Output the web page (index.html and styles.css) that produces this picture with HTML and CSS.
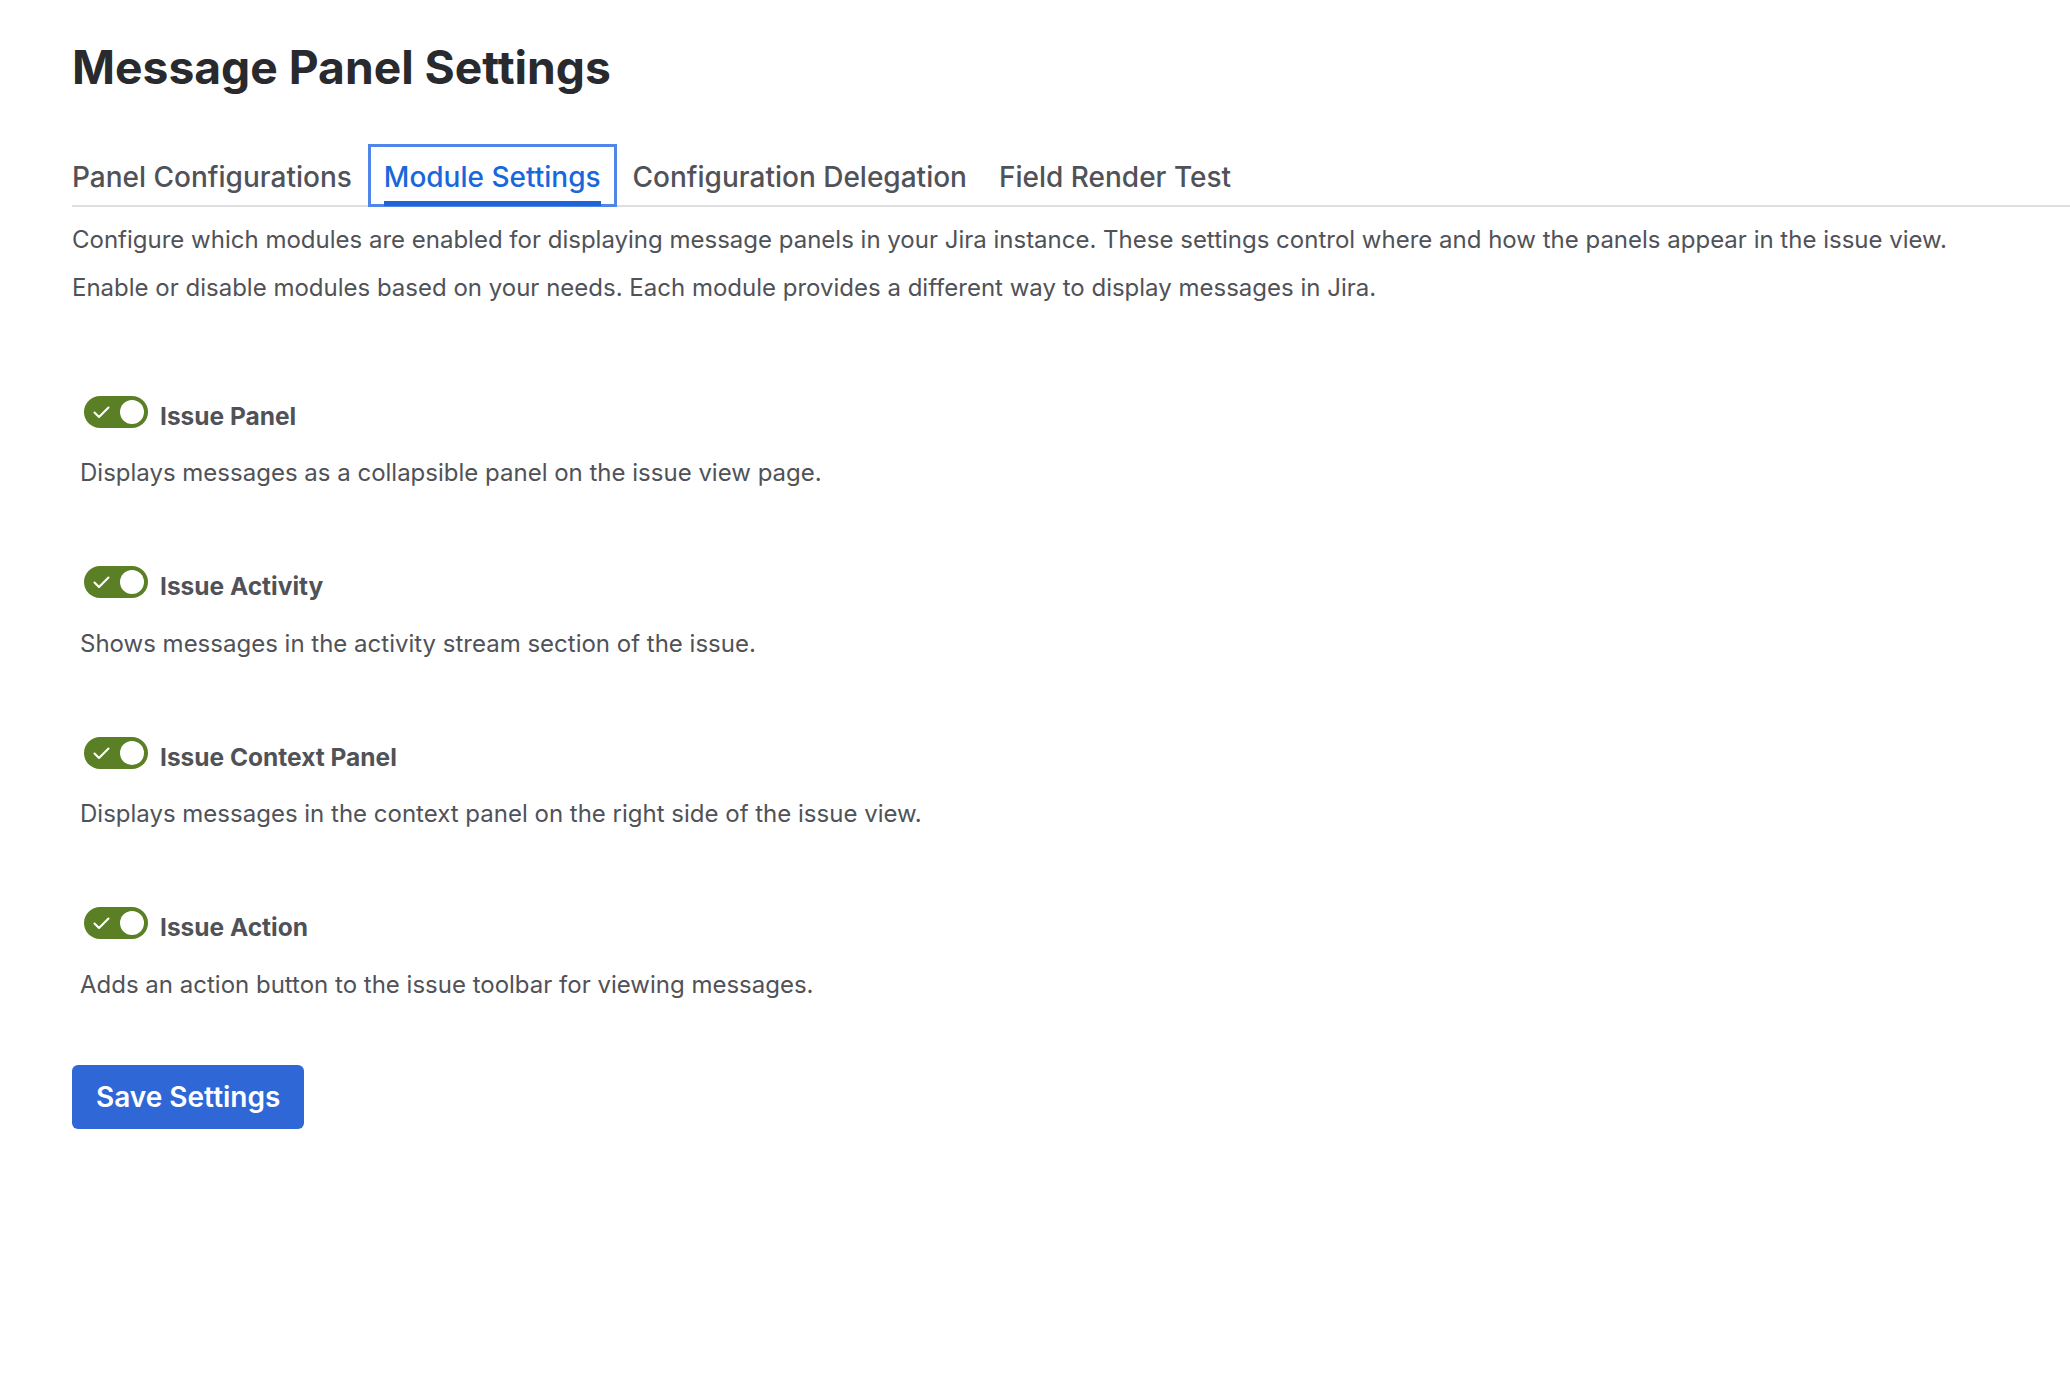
FILE: index.html
```html
<!DOCTYPE html>
<html lang="en">
<head>
<meta charset="utf-8">
<title>Message Panel Settings</title>
<link rel="stylesheet" href="styles.css">
</head>
<body>
<div class="page">
  <h1 class="title">Message Panel Settings</h1>
  <div class="tabbar">
    <div class="tablist">
      <div class="tab">Panel Configurations</div>
      <div class="tab tab-selected">Module Settings</div>
      <div class="tab">Configuration Delegation</div>
      <div class="tab">Field Render Test</div>
    </div>
  </div>
  <p class="intro">Configure which modules are enabled for displaying message panels in your Jira instance. These settings control where and how the panels appear in the issue view.</p>
  <p class="intro">Enable or disable modules based on your needs. Each module provides a different way to display messages in Jira.</p>

  <div class="modules">
    <div class="module">
      <div class="module-row">
        <span class="toggle"><svg class="check" width="17" height="13" viewBox="0 0 17 13"><polyline points="1.5,6.5 6,11 15.5,1.5" fill="none" stroke="#fff" stroke-width="2.1" stroke-linecap="round" stroke-linejoin="round"/></svg><span class="knob"></span></span>
        <span class="module-label">Issue Panel</span>
      </div>
      <p class="module-desc">Displays messages as a collapsible panel on the issue view page.</p>
    </div>
    <div class="module">
      <div class="module-row">
        <span class="toggle"><svg class="check" width="17" height="13" viewBox="0 0 17 13"><polyline points="1.5,6.5 6,11 15.5,1.5" fill="none" stroke="#fff" stroke-width="2.1" stroke-linecap="round" stroke-linejoin="round"/></svg><span class="knob"></span></span>
        <span class="module-label">Issue Activity</span>
      </div>
      <p class="module-desc">Shows messages in the activity stream section of the issue.</p>
    </div>
    <div class="module">
      <div class="module-row">
        <span class="toggle"><svg class="check" width="17" height="13" viewBox="0 0 17 13"><polyline points="1.5,6.5 6,11 15.5,1.5" fill="none" stroke="#fff" stroke-width="2.1" stroke-linecap="round" stroke-linejoin="round"/></svg><span class="knob"></span></span>
        <span class="module-label">Issue Context Panel</span>
      </div>
      <p class="module-desc">Displays messages in the context panel on the right side of the issue view.</p>
    </div>
    <div class="module">
      <div class="module-row">
        <span class="toggle"><svg class="check" width="17" height="13" viewBox="0 0 17 13"><polyline points="1.5,6.5 6,11 15.5,1.5" fill="none" stroke="#fff" stroke-width="2.1" stroke-linecap="round" stroke-linejoin="round"/></svg><span class="knob"></span></span>
        <span class="module-label">Issue Action</span>
      </div>
      <p class="module-desc">Adds an action button to the issue toolbar for viewing messages.</p>
    </div>
  </div>

  <button class="save-btn" type="button">Save Settings</button>
</div>
</body>
</html>
```

FILE: styles.css
```css
* { box-sizing: border-box; }

html, body {
  margin: 0;
  padding: 0;
  background: #ffffff;
}

body {
  font-family: Inter, "Noto Sans", "Liberation Sans", sans-serif;
  color: #292a2e;
}

.page {
  padding: 39px 0 0 72px;
}

.title {
  margin: 0;
  font-size: 46.2px;
  line-height: 56px;
  font-weight: 700;
  color: #292a2e;
}

.tabbar {
  margin-top: 49px;
  border-bottom: 2px solid #dddee1;
}

.tablist {
  display: flex;
  margin-left: -16px;
  margin-bottom: -2px;
}

.tab {
  position: relative;
  padding: 16px 16px 13px;
  font-size: 28px;
  line-height: 34px;
  font-weight: 500;
  color: #505258;
  white-space: nowrap;
}

.tab-selected {
  color: #1868db;
  box-shadow: inset 0 0 0 3px #4f86e8;
}

.tab-selected::after {
  content: "";
  position: absolute;
  left: 16px;
  right: 16px;
  bottom: 1px;
  height: 5px;
  background: #1f63d6;
}

.intro {
  margin: 0 0 11.5px;
  font-size: 24px;
  line-height: 36px;
  color: #505258;
}

.tabbar + .intro {
  margin-top: 15px;
}

.modules {
  margin-top: 90px;
  padding-left: 8px;
}

.module {
  margin-bottom: 75px;
}

.module:last-child {
  margin-bottom: 62px;
}

.module-row {
  display: flex;
  align-items: flex-start;
}

.toggle {
  position: relative;
  display: inline-block;
  width: 64px;
  height: 32px;
  margin: 0 12px 0 4px;
  border-radius: 16px;
  background: #5b7f24;
  flex: none;
}

.check {
  position: absolute;
  left: 9px;
  top: 10px;
}

.knob {
  position: absolute;
  right: 4px;
  top: 4px;
  width: 24px;
  height: 24px;
  border-radius: 50%;
  background: #ffffff;
}

.module-label {
  padding-top: 6px;
  font-size: 24.5px;
  line-height: 29px;
  font-weight: 700;
  color: #505258;
}

.module-desc {
  margin: 24.5px 0 0;
  font-size: 24px;
  line-height: 36px;
  color: #505258;
}

.save-btn {
  display: block;
  height: 64px;
  padding: 0 24px;
  border: none;
  border-radius: 6px;
  background: #2f67d6;
  color: #ffffff;
  font-family: inherit;
  font-size: 28px;
  font-weight: 600;
  line-height: 64px;
  cursor: pointer;
}
```
